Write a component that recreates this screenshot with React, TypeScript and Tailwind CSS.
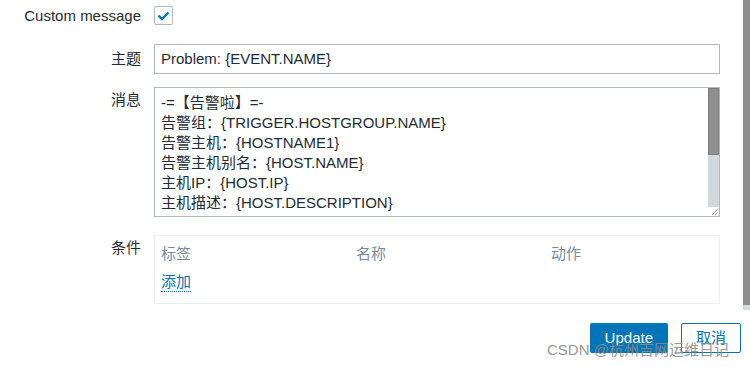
import React from 'react';

const font = { fontFamily: '"Liberation Sans", Arial, "Noto Sans CJK SC", sans-serif' };

const Label = ({ children, pt = 'pt-0' }: { children: React.ReactNode; pt?: string }) => (
  <div className={`w-[141px] shrink-0 text-right leading-[20px] ${pt}`}>{children}</div>
);

const lines = [
  '-=【告警啦】=-',
  '告警组：{TRIGGER.HOSTGROUP.NAME}',
  '告警主机：{HOSTNAME1}',
  '告警主机别名：{HOST.NAME}',
  '主机IP：{HOST.IP}',
  '主机描述：{HOST.DESCRIPTION}',
];

export default function App() {
  return (
    <div
      className="relative flex w-[750px] h-[367px] overflow-hidden bg-white text-[15px] text-[#1f2c33]"
      style={font}
    >
      <div className="flex-1 flex flex-col pt-[6px]">
        {/* custom message */}
        <div className="flex items-center gap-[13px] h-[19px]">
          <Label>Custom message</Label>
          <div className="w-[19px] h-[19px] border border-[#acbbc2] rounded-[2px] flex items-center justify-center bg-white">
            <svg width="19" height="19" viewBox="0 0 19 19" className="-m-px">
              <polyline points="4.5,9.5 8,13 14.5,6.5" fill="none" stroke="#0275b8" strokeWidth="2.4" />
            </svg>
          </div>
        </div>

        {/* subject */}
        <div className="flex items-center gap-[13px] mt-[19px]">
          <Label>主题</Label>
          <div className="w-[566px] h-[30px] border border-[#acbbc2] flex items-center px-[6px]">
            Problem: {'{EVENT.NAME}'}
          </div>
        </div>

        {/* message */}
        <div className="flex gap-[13px] mt-[13px]">
          <Label pt="pt-[3px]">消息</Label>
          <div className="w-[566px] h-[130px] border border-[#acbbc2] flex overflow-hidden">
            <div className="flex-1 pl-[6px] pt-[5px] leading-[20px] whitespace-nowrap overflow-hidden">
              {lines.map((l) => (
                <div key={l}>{l}</div>
              ))}
            </div>
            <div className="w-[11px] flex flex-col">
              <div className="h-[67px] bg-[#8f8f8f] border border-[#7d7d7d]" />
              <div className="h-[52px] bg-[#d0d8de]" />
              <div className="flex-1 flex items-end justify-end pr-px pb-px">
                <svg width="7" height="7" viewBox="0 0 7 7">
                  <line x1="1" y1="7" x2="7" y2="1" stroke="#666" strokeWidth="1" strokeDasharray="1 1" />
                  <line x1="4" y1="7" x2="7" y2="4" stroke="#666" strokeWidth="1" strokeDasharray="1 1" />
                </svg>
              </div>
            </div>
          </div>
        </div>

        {/* conditions */}
        <div className="flex gap-[13px] mt-[18px]">
          <Label pt="pt-[3px]">条件</Label>
          <div className="w-[566px] h-[69px] border border-[#ebeef0] pl-[6px] pt-[8px] leading-[20px]">
            <div className="grid grid-cols-[195px_195px_1fr] text-[#768d99]">
              <div>标签</div>
              <div>名称</div>
              <div>动作</div>
            </div>
            <div className="mt-[8px]">
              <span className="text-[#0275b8] border-b border-dotted border-[#0275b8] pb-px">添加</span>
            </div>
          </div>
        </div>

        {/* buttons */}
        <div className="flex justify-end gap-[13px] mt-[19px] pr-[2px]">
          <button className="h-[30px] px-[15px] rounded-[2px] bg-[#0275b8] text-white">Update</button>
          <button className="h-[30px] px-[14px] rounded-[2px] border border-[#0275b8] bg-white text-[#0275b8]">
            取消
          </button>
        </div>
      </div>

      {/* page scrollbar */}
      <div className="w-[7px] flex flex-col">
        <div className="h-[305px] bg-[#8f8f8f]" />
        <div className="h-[5px] bg-[#d6dde2]" />
      </div>

      <div className="absolute left-[547px] top-[340px] text-[15px] leading-[20px] text-[#8a8a8a]/90 whitespace-nowrap">
        CSDN @杭州吉网运维日记
      </div>
    </div>
  );
}
